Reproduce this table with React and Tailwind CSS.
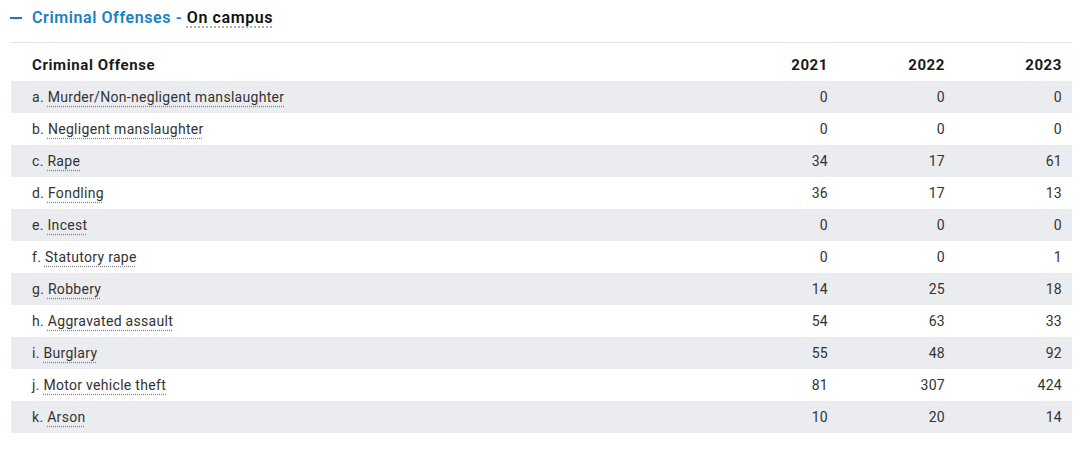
import React from "react";

const rows = [
  ["a.", "Murder/Non-negligent manslaughter", 0, 0, 0],
  ["b.", "Negligent manslaughter", 0, 0, 0],
  ["c.", "Rape", 34, 17, 61],
  ["d.", "Fondling", 36, 17, 13],
  ["e.", "Incest", 0, 0, 0],
  ["f.", "Statutory rape", 0, 0, 1],
  ["g.", "Robbery", 14, 25, 18],
  ["h.", "Aggravated assault", 54, 63, 33],
  ["i.", "Burglary", 55, 48, 92],
  ["j.", "Motor vehicle theft", 81, 307, 424],
  ["k.", "Arson", 10, 20, 14],
];

export default function App() {
  return (
    <div className="w-[1080px] h-[451px] bg-white" style={{ fontFamily: "Roboto, 'Liberation Sans', sans-serif" }}>
      <div className="ml-[10px] w-[1062px]">
        <div className="h-[36px] flex items-center">
          <span className="w-[12px] h-[2px] bg-[#1a80c0] mr-[10px]" />
          <span className="text-[16px] font-semibold text-[#1a80c0] tracking-[0.6px]">Criminal Offenses -&nbsp;</span>
          <span className="text-[16px] font-semibold text-[#111] tracking-[0.6px] underline decoration-dotted decoration-[#999] underline-offset-[4px]">On campus</span>
        </div>
        <div className="mt-[6px] border-t border-[#e3e3e3]" />
        <div className="mt-[6px] ml-[1px] grid grid-cols-[1fr_117px_117px_117px]">
          <div className="h-[32px] flex items-center pl-[21px] text-[15px] font-bold text-[#1a1a1a] tracking-[0.6px]">Criminal Offense</div>
          {["2021", "2022", "2023"].map((y) => (
            <div key={y} className="h-[32px] flex items-center justify-end pr-[10px] text-[15px] font-bold text-[#1a1a1a] tracking-[0.6px]">{y}</div>
          ))}
          {rows.map((r, i) => {
            const bg = i % 2 === 0 ? "bg-[#ebecf0]" : "bg-white";
            return (
              <React.Fragment key={r[1]}>
                <div className={`${bg} h-[32px] flex items-center pl-[21px] text-[14px] text-[#333] tracking-[0.3px]`}>
                  <span>{r[0]}&nbsp;</span>
                  <span className="underline decoration-dotted decoration-[#888] underline-offset-[4px]">{r[1]}</span>
                </div>
                {[r[2], r[3], r[4]].map((v, j) => (
                  <div key={j} className={`${bg} h-[32px] flex items-center justify-end pr-[10px] text-[14px] text-[#333] tracking-[0.3px]`}>{v}</div>
                ))}
              </React.Fragment>
            );
          })}
        </div>
      </div>
    </div>
  );
}
